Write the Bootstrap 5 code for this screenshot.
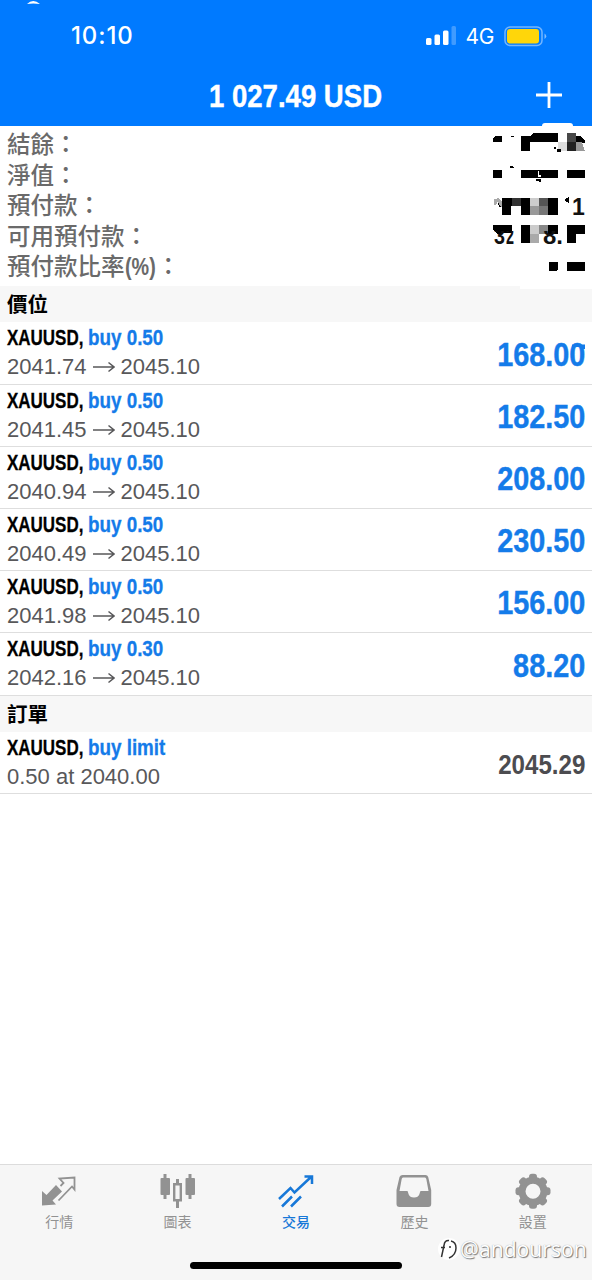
<!DOCTYPE html>
<html lang="zh-Hant">
<head>
<meta charset="utf-8">
<meta name="viewport" content="width=device-width, initial-scale=1">
<title>交易</title>
<link href="https://cdn.jsdelivr.net/npm/bootstrap@5.3.0/dist/css/bootstrap.min.css" rel="stylesheet">
<style>
body{font-family:"Liberation Sans","Noto Sans CJK TC",sans-serif;background:#fff;color:#000;line-height:1}
.screen{height:1280px}
.topbar{background:#007aff;height:126px;color:#fff}
.status{height:72px;padding:0 45px 0 71px;font-family:Inter,sans-serif}
.clock{font-size:24px;font-weight:500;letter-spacing:.9px}
.net{font-size:21px;margin-left:10px;margin-right:10px;letter-spacing:-.4px}
.titlebar{height:54px}
.sq{display:inline-block;white-space:nowrap;transform-origin:0 50%}
.sq-r{display:inline-block;white-space:nowrap;transform-origin:100% 50%}
.amount-title{font-size:32px;font-weight:700;transform:scaleX(.861);transform-origin:50% 50%;-webkit-text-stroke:.4px}
.add{right:30px;top:10px}
.summary{height:160px;padding:4px 7px 0;color:#6a6a6a;font-size:23.5px}
.summary .line{height:30.5px;line-height:30.5px;font-weight:500;white-space:nowrap}
.pct{font-weight:700;transform:scaleX(.84);width:32px}
.mosaic{right:0;top:0}
.cover{left:542px;top:-3px;width:31px;height:4px;background:#fff;border-radius:3px 3px 0 0}
.section-head{height:36.4px;line-height:38px;background:#f7f7f7;font-size:20.5px;font-weight:700;padding-left:7px}
.deal{height:62.2px;border-bottom:1px solid #dedede;padding:4px 7px 0}
.deal .top{font-size:22px;line-height:24px;font-weight:700;height:24px;-webkit-text-stroke:.3px}
.sym{width:81px}.sym .sq{transform:scaleX(.772)}
.side{color:#147be9}.side .sq{transform:scaleX(.855)}
.prices{font-size:22px;line-height:24px;color:#58585a;margin-top:5px;height:24px}
.arrow{margin:0 6px;width:22px}
.gain{color:#147be9;font-size:32.5px;font-weight:700;transform:scaleX(.888);-webkit-text-stroke:.4px}
.mark-price{color:#4c4c50;font-size:27.5px;font-weight:700;transform:scaleX(.878)}
.tabs{height:116px;background:#f6f6f6;border-top:1px solid #dcdcdc;color:#929292;font-size:14px}
.tab-item{padding-top:8px}
.tab-item svg{height:37px;width:40px;display:block}
.tab-item span{margin-top:5px}
.tab-item.on{color:#1778d8;font-weight:500}
.home{left:190px;top:97px;width:212px;height:7px;border-radius:4px;background:#000}
.credit{left:438px;top:70px;height:28px;color:#fff}
.credit span{font:400 21px/26px "Open Sans",sans-serif;text-shadow:1px 1px 1px #777,0 0 1px #999;letter-spacing:.1px}
</style>
</head>
<body>
<div class="screen d-flex flex-column overflow-hidden">
  <header class="topbar position-relative">
    <svg class="position-absolute start-0 top-0" width="60" height="5"><path d="M27 4Q33-2 40 4Q33 3 27 4Z" fill="#fff"/></svg>
    <div class="status d-flex align-items-center justify-content-between">
      <span class="clock">10:10</span>
      <div class="d-flex align-items-center">
        <svg width="30" height="20" fill="#fff"><rect x="0" y="12" width="5.5" height="7" rx="1.5"/><rect x="8.5" y="8.5" width="5.5" height="10.5" rx="1.5"/><rect x="17" y="4.500" width="5.500" height="14.500" rx="1.500"/><rect x="25.500" y="0" width="4.500" height="19" rx="1.500" opacity=".25"/></svg>
        <span class="net">4G</span>
        <svg width="43" height="21"><rect x="1" y="1" width="37" height="18.500" rx="5" fill="none" stroke="#fff" stroke-opacity=".45" stroke-width="1.500"/><rect x="3" y="3" width="32" height="14.500" rx="3" fill="#ffd60a"/><path d="M40.500 7.500Q44 10 40.500 13Z" fill="#fff" opacity=".5"/></svg>
      </div>
    </div>
    <div class="titlebar position-relative d-flex justify-content-center">
      <span class="amount-title pt-2 text-nowrap">1 027.49 USD</span>
      <svg class="add position-absolute" width="26" height="26"><path d="M13 0V26M0 13H26" stroke="#fff" stroke-width="2.800"/></svg>
    </div>
  </header>

  <section class="summary position-relative">
    <i class="cover position-absolute"></i>
    <div class="line">結餘：</div>
    <div class="line">淨值：</div>
    <div class="line">預付款：</div>
    <div class="line">可用預付款：</div>
    <div class="line">預付款比率<span class="sq pct">(%)</span>：</div>
    <svg class="mosaic position-absolute" width="112" height="164" viewBox="480 126 112 164" shape-rendering="crispEdges">
      <path d="M493 138l3-2h6v6h-9zM521 136h9l4-3h24v9h-28v9h-9zM576 136h5l4 5v2h-9z"/>
      <path fill="#484848" d="M567 133h9v9h-9z"/><path fill="#222" d="M567 142h9v9h-9z"/><path fill="#999" d="M576 142h6l3 9h-9z"/><path fill="#ddd" d="M558 142h9v9h-9z"/>
      <path d="M554 147h2v2h-2zM557 149h4v3h-4zM511 136h3v1h-3z"/>
      <path d="M493 170h9v8h-9zM521 170h37v8h-37zM567 170h18v8h-18zM508 167l3-1 3 1v1h-3zM536 179h5v3h-2v-1h-3z"/><path fill="#fff" d="M538 171h1v4h2v2h-3z"/>
      <path fill="#aaa" d="M494 199l5-1 3 4v5h-2l-2-6-2 4h-2z"/><path d="M498 202l3 5h-2z"/>
      <path d="M502 198h10v8h-1v9h-9zM521 198h9v17h-9zM548 198h10v17h-10zM564 200l5-3v6z"/>
      <path fill="#333" d="M512 198h9v8h-9z"/><path fill="#ccc" d="M530 198h9v8h-9z"/><path fill="#555" d="M539 198h9v8h-9z"/><path fill="#999" d="M530 206h9v9h-9z"/><path fill="#777" d="M539 206h9v9h-9z"/>
      <path d="M493 225h19v8h-9l-3 1h-3l-4-5zM521 225h9v18h-9zM548 225h10v9h-10zM567 225h18v9h-9v9h-9z"/>
      <path fill="#ccc" d="M530 225h9v9h-9z"/><path fill="#888" d="M539 225h9v9h-9z"/><path fill="#aaa" d="M530 234h9v9h-9z"/>
      <path d="M549 262h9v7l-2 2h-7zM567 262h18v9h-18z"/>
      <g font-family="Liberation Sans" font-size="23" font-weight="700" fill="#111" shape-rendering="auto"><text x="572" y="215" textLength="12">1</text><g clip-path="url(#low)"><text x="494" y="244" textLength="11" lengthAdjust="spacingAndGlyphs">3</text><text x="506" y="244" textLength="8" lengthAdjust="spacingAndGlyphs">2</text><text x="543" y="244" textLength="20" lengthAdjust="spacingAndGlyphs">8.</text></g></g>
      <clipPath id="low"><path d="M480 231h112v16H480z"/></clipPath>
      <path fill="#fff" d="M520 284h72v5h-72z"/>
    </svg>
  </section>

  <h2 class="section-head m-0">價位</h2>
  <main id="deals"></main>
  <h2 class="section-head m-0">訂單</h2>
  <article class="deal d-flex justify-content-between">
    <div>
      <div class="top d-flex"><span class="sym"><span class="sq">XAUUSD,</span></span><span class="side"><span class="sq">buy limit</span></span></div>
      <div class="prices">0.50 at 2040.00</div>
    </div>
    <div class="d-flex align-items-center"><span class="sq-r mark-price">2045.29</span></div>
  </article>

  <nav class="tabs position-relative d-flex mt-auto">
    <div class="tab-item flex-fill w-100 d-flex flex-column align-items-center">
      <svg viewBox="0 0 40 37"><path d="M3 18v14.500l14-1-3.500-4L23 18.500 17 12 7.500 22z" fill="currentColor"/><path d="M19.500 27.500L33 13.500l2.500 3V4.500L20.500 5.500l4 4.500-3 3" fill="none" stroke="currentColor" stroke-width="1.800"/></svg><span>行情</span>
    </div>
    <div class="tab-item flex-fill w-100 d-flex flex-column align-items-center">
      <svg viewBox="0 0 40 37" fill="currentColor"><rect x="2.500" y="5" width="9.500" height="17" rx="1"/><path d="M5.500 1h3v25h-3zM30.500 1h3v25h-3zM18 6h3v5h-3zM18 27h3v8h-3z"/><rect x="27.500" y="5" width="9.500" height="17" rx="1"/><path d="M16.200 11.200h6.600v16h-6.600z" fill="none" stroke="currentColor" stroke-width="2.400"/></svg><span>圖表</span>
    </div>
    <div class="tab-item on flex-fill w-100 d-flex flex-column align-items-center">
      <svg viewBox="0 0 40 37" fill="none" stroke="currentColor" stroke-width="2.500"><path d="M3 26L14.500 15l4 4.500L35 4M6 33.500l10-10M15 33.500l10-10M28.500 3.500H36V11"/></svg><span>交易</span>
    </div>
    <div class="tab-item flex-fill w-100 d-flex flex-column align-items-center">
      <svg viewBox="0 0 40 37"><path fill="currentColor" fill-rule="evenodd" d="M8.500 2h23q2 0 2.700 2l3 13v14q0 3-3 3H5.500q-3 0-3-3V17l3-13Q6.500 2 8.500 2zM9 4.500Q8 4.500 7.700 6L5.500 18H13q1.200 0 1.200 2 1 4.500 5.800 4.500t5.800-4.500q0-2 1.200-2h7.500L32.300 6Q32 4.500 31 4.500z"/></svg><span>歷史</span>
    </div>
    <div class="tab-item flex-fill w-100 d-flex flex-column align-items-center">
      <svg viewBox="0 0 40 37"><g transform="translate(20 18.300)"><circle r="11" fill="none" stroke="currentColor" stroke-width="7"/><g fill="currentColor" id="gear"></g></g></svg><span>設置</span>
    </div>
    <i class="home position-absolute"></i>
    <div class="credit position-absolute d-flex align-items-center">
      <svg width="22" height="26" viewBox="0 0 22 26"><circle cx="11" cy="13" r="11" fill="#fff"/><path d="M11 4.500q-4.500-.5-5 5L3.500 21M3 11.500h4M11 11h2M13 5q5 1 5 7 0 7-7 10" fill="none" stroke="#333" stroke-width="1.500"/></svg>
      <span>@andourson</span>
    </div>
  </nav>
</div>
<script src="https://cdn.jsdelivr.net/npm/bootstrap@5.3.0/dist/js/bootstrap.bundle.min.js"></script>
<script>
const deals=[["0.50","2041.74","168.00"],["0.50","2041.45","182.50"],["0.50","2040.94","208.00"],["0.50","2040.49","230.50"],["0.50","2041.98","156.00"],["0.30","2042.16","88.20"]];
document.getElementById("deals").innerHTML=deals.map(([lot,open,gain],i)=>`
<article class="deal d-flex justify-content-between">
  <div>
    <div class="top d-flex"><span class="sym"><span class="sq">XAUUSD,</span></span><span class="side"><span class="sq">buy ${lot}</span></span></div>
    <div class="prices d-flex align-items-center"><span>${open}</span><svg class="arrow" height="12"><path d="M0 6H21M15.500 1.500L21 6 15.500 10.500" fill="none" stroke="#58585a" stroke-width="1.500"/></svg><span>2045.10</span></div>
  </div>
  <div class="d-flex align-items-center position-relative"><span class="sq-r gain">${gain}</span>${i?"":'<svg class="position-absolute end-0 top-0" width="14" height="24"><path d="M1 18.500H14V23H11V21H1Z" fill="#147be9"/></svg>'}</div>
</article>`).join("");
document.getElementById("gear").innerHTML=[...Array(8)].map((_,i)=>`<rect x="-4" y="-17.500" width="8" height="7" rx="3" transform="rotate(${i*45})"/>`).join("");
</script>
</body>
</html>
